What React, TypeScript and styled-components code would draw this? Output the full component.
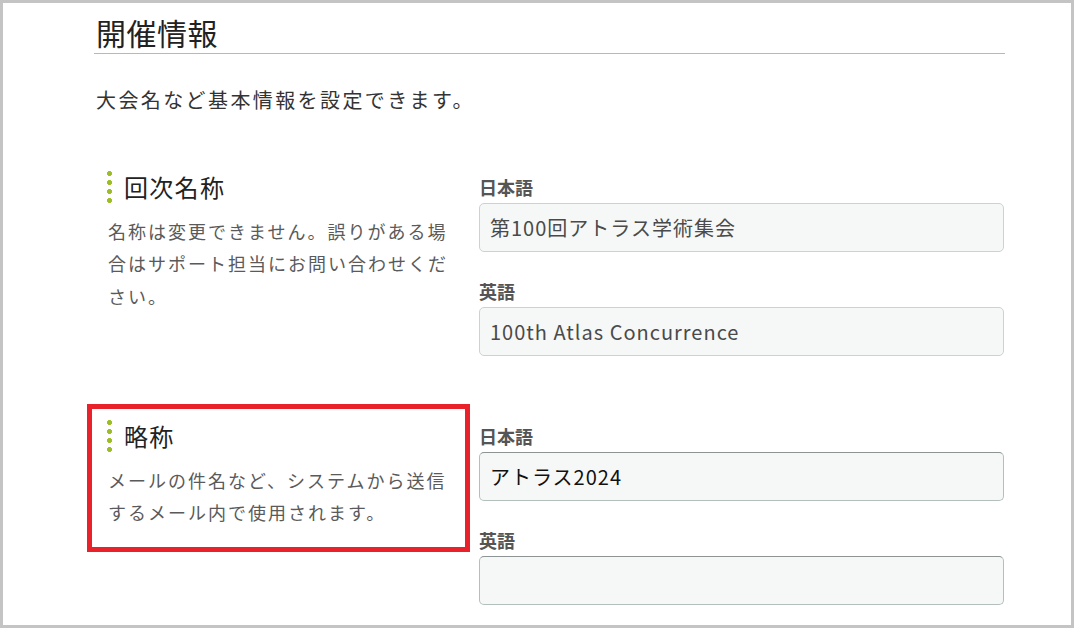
import React from "react";
import styled, { createGlobalStyle } from "styled-components";

const GlobalStyle = createGlobalStyle`
  html, body {
    margin: 0;
    padding: 0;
    background: #ffffff;
  }
  body {
    font-family: "Noto Sans CJK JP", "Noto Sans", sans-serif;
    color: #333;
  }
  * { box-sizing: border-box; }
`;

const Frame = styled.div`
  width: 1074px;
  height: 628px;
  border: 3px solid #c4c4c4;
  background: #ffffff;
  overflow: hidden;
  padding: 0 66px 0 91px;
`;

const Heading = styled.h1`
  margin: 11px 0 0;
  padding: 0 0 3px 2px;
  font-size: 30px;
  line-height: 36px;
  font-weight: 400;
  letter-spacing: 0.5px;
  color: #222;
  border-bottom: 1px solid #b0bcba;
`;

const Lead = styled.p`
  margin: 30px 0 0;
  padding-left: 2px;
  font-size: 20px;
  line-height: 32px;
  letter-spacing: 2.4px;
  color: #333;
`;

const Row = styled.section<{ $first?: boolean }>`
  display: grid;
  grid-template-columns: 385px 525px;
  margin-top: ${(p) => (p.$first ? "58px" : "67px")};
`;

const Info = styled.div`
  position: relative;
  align-self: start;
  padding-left: 14px;
`;

const Highlight = styled.div`
  position: absolute;
  top: -19px;
  bottom: -23px;
  left: -7px;
  right: 9px;
  border: 5px solid #e8212a;
  pointer-events: none;
`;

const TitleRow = styled.div`
  display: flex;
  align-items: center;
  gap: 12px;
  height: 26px;
`;

const Dots = styled.span`
  display: block;
  flex: none;
  width: 5px;
  height: 36px;
  margin-left: -1px;
  background-image: radial-gradient(circle, #9bbd28 2.2px, transparent 2.7px);
  background-size: 5px 9px;
  background-position: 0 0;
`;

const Title = styled.h2`
  margin: 0;
  font-size: 24px;
  line-height: 26px;
  font-weight: 400;
  letter-spacing: 1.3px;
  color: #222;
`;

const Note = styled.p`
  margin: 15px 0 0;
  max-width: 350px;
  font-size: 18px;
  line-height: 32.4px;
  letter-spacing: 2px;
  color: #5a5a5a;
`;

const Fields = styled.div`
  display: flex;
  flex-direction: column;
  gap: 26px;
`;

const Field = styled.label`
  display: flex;
  flex-direction: column;
  gap: 3px;
`;

const FieldLabel = styled.span`
  font-size: 18px;
  line-height: 26px;
  font-weight: 700;
  color: #555;
`;

const Input = styled.input<{ $locked?: boolean }>`
  width: 525px;
  height: 49px;
  padding: 0 10px;
  border: 1px solid ${(p) => (p.$locked ? "#cdd1d0" : "#b4bfbd")};
  border-top-color: ${(p) => (p.$locked ? "#cdd1d0" : "#8e9493")};
  border-radius: 5px;
  background: #f6f8f7;
  font-family: "Noto Sans CJK JP", "Noto Sans", sans-serif;
  font-size: 20px;
  letter-spacing: 1px;
  color: ${(p) => (p.$locked ? "#4a4a4a" : "#111")};
  outline: none;
  &:disabled {
    opacity: 1;
    -webkit-text-fill-color: #4a4a4a;
  }
`;

type Section = {
  title: string;
  note: string;
  ja: string;
  en: string;
  locked?: boolean;
  highlight?: boolean;
};

const sections: Section[] = [
  {
    title: "回次名称",
    note: "名称は変更できません。誤りがある場合はサポート担当にお問い合わせください。",
    ja: "第100回アトラス学術集会",
    en: "100th Atlas Concurrence",
    locked: true,
  },
  {
    title: "略称",
    note: "メールの件名など、システムから送信するメール内で使用されます。",
    ja: "アトラス2024",
    en: "",
    highlight: true,
  },
];

export default function App() {
  return (
    <>
      <GlobalStyle />
      <Frame>
        <Heading>開催情報</Heading>
        <Lead>大会名など基本情報を設定できます。</Lead>
        {sections.map((s, i) => (
          <Row key={s.title} $first={i === 0}>
            <Info>
              {s.highlight && <Highlight />}
              <TitleRow>
                <Dots />
                <Title>{s.title}</Title>
              </TitleRow>
              <Note>{s.note}</Note>
            </Info>
            <Fields>
              <Field>
                <FieldLabel>日本語</FieldLabel>
                <Input $locked={s.locked} disabled={s.locked} defaultValue={s.ja} />
              </Field>
              <Field>
                <FieldLabel>英語</FieldLabel>
                <Input $locked={s.locked} disabled={s.locked} defaultValue={s.en} />
              </Field>
            </Fields>
          </Row>
        ))}
      </Frame>
    </>
  );
}
